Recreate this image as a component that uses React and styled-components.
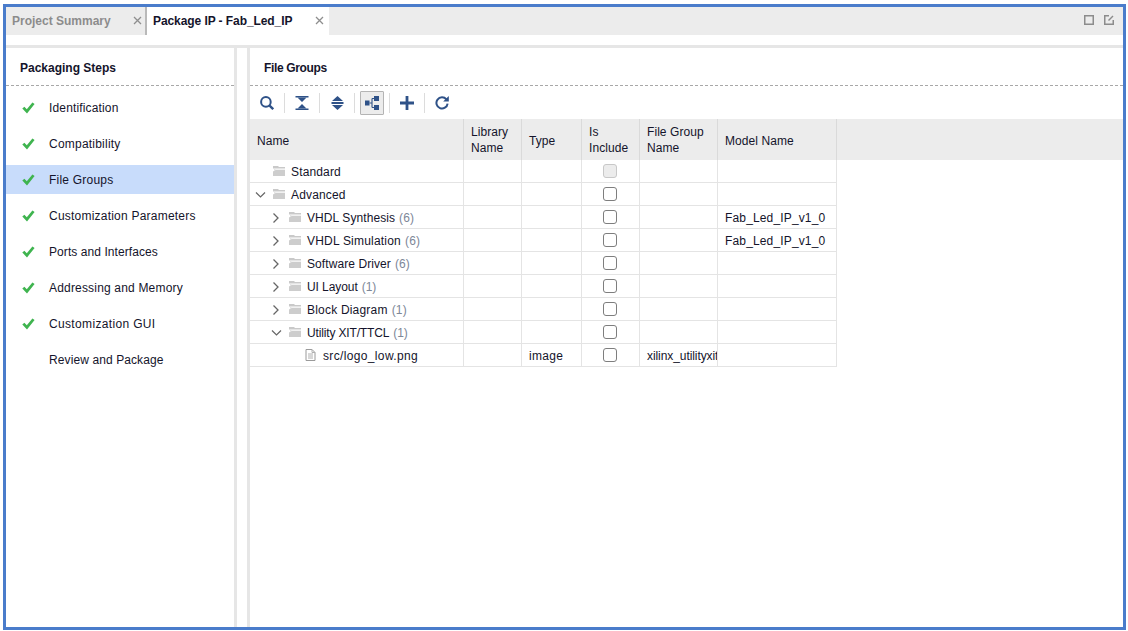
import React from "react";
import styled, { createGlobalStyle } from "styled-components";

const Global = createGlobalStyle`
  html, body { margin: 0; padding: 0; background: #fff; }
  body { font-family: "Liberation Sans", Arial, sans-serif; font-size: 12px; color: #14142b; overflow: hidden; }
  * { box-sizing: border-box; }
`;

const Frame = styled.div`
  margin: 4px 2px 0 3px;
  height: 626px;
  border: 3px solid #4a7ccb;
  display: flex;
  flex-direction: column;
  background: #fff;
`;
const TabBar = styled.div`
  height: 28px;
  background: #ececec;
  display: flex;
  align-items: stretch;
  flex: none;
`;
const Tab = styled.div`
  width: ${p => p.$w}px;
  display: flex;
  align-items: center;
  justify-content: space-between;
  padding: 0 ${p => (p.$active ? 5 : 3)}px 1px 6px;
  font-weight: bold;
  font-size: 12px;
  letter-spacing: ${p => (p.$active ? "-0.08px" : "0")};
  background: ${p => (p.$active ? "#fff" : "transparent")};
  color: ${p => (p.$active ? "#14142b" : "#8c8c8c")};
  border-right: ${p => (p.$active ? "0" : "2px solid #b9b9b9")};
`;
const TabSpacer = styled.div`
  flex: 1;
  display: flex;
  align-items: center;
  justify-content: flex-end;
  gap: 10px;
  padding: 0 9px 2px 0;
`;
const Body = styled.div`
  flex: 1;
  margin-top: 10px;
  border-top: 3px solid #e6e6e6;
  display: flex;
  min-height: 0;
`;
const Side = styled.div`
  width: 228px;
  flex: none;
`;
const Gutter = styled.div`
  width: 16px;
  flex: none;
  border-left: 3px solid #e6e6e6;
  border-right: 3px solid #e6e6e6;
`;
const Main = styled.div`
  flex: 1;
  min-width: 0;
  display: flex;
  flex-direction: column;
`;
const PanelTitle = styled.div`
  height: 38px;
  padding: 2px 0 0 14px;
  display: flex;
  align-items: center;
  font-weight: bold;
  font-size: 12px;
  letter-spacing: ${p => p.$ls || 0}px;
  color: #14142b;
  border-bottom: 1px dashed #a8a8a8;
  flex: none;
`;
const Steps = styled.div`
  display: flex;
  flex-direction: column;
  gap: 7px;
  padding-top: 7px;
`;
const Step = styled.div`
  height: 29px;
  display: flex;
  align-items: center;
  gap: 13px;
  padding-left: 16px;
  letter-spacing: ${p => p.$ls}px;
  background: ${p => (p.$sel ? "#c8dcfb" : "transparent")};
`;
const CheckSlot = styled.span`
  width: 14px;
  height: 12px;
  display: inline-flex;
`;
const Toolbar = styled.div`
  height: 33px;
  display: flex;
  align-items: center;
  padding: 0 0 0 5px;
  flex: none;
`;
const ToolBtn = styled.div`
  width: 24px;
  height: 24px;
  display: flex;
  align-items: center;
  justify-content: center;
  background: ${p => (p.$on ? "#ececec" : "transparent")};
  border: ${p => (p.$on ? "1px solid #b4b4b4" : "0")};
  border-radius: 1px;
`;
const ToolSep = styled.div`
  width: 1px;
  height: 20px;
  background: #dcdcdc;
  margin: 0 5px;
`;
const HeadRow = styled.div`
  height: 41px;
  background: #ececec;
  display: flex;
  flex: none;
`;
const HeadCell = styled.div`
  width: ${p => p.$w}px;
  flex: none;
  display: flex;
  align-items: center;
  padding: ${p => (p.$single ? 3 : 1)}px 4px 0 7px;
  line-height: 16px;
  letter-spacing: 0.07px;
  border-right: 1px solid #dadada;
`;
const Row = styled.div`
  height: 23px;
  width: 587px;
  display: flex;
  border-bottom: 1px solid #e4e4e4;
  flex: none;
`;
const Cell = styled.div`
  width: ${p => p.$w}px;
  flex: none;
  display: flex;
  align-items: center;
  padding: 2px 0 0 7px;
  letter-spacing: ${p => p.$ls ?? 0.15}px;
  border-right: 1px solid #e4e4e4;
  white-space: nowrap;
  overflow: hidden;
`;
const BoxCell = styled.div`
  width: ${p => p.$w}px;
  flex: none;
  display: flex;
  align-items: center;
  justify-content: center;
  padding-right: 2px;
  border-right: 1px solid #e4e4e4;
`;
const NameCell = styled(Cell)`
  padding-left: ${p => p.$level * 16 + 5}px;
`;
const Twist = styled.span`
  width: 12px;
  height: 12px;
  flex: none;
  display: inline-flex;
  margin-right: 6px;
`;
const NodeIcon = styled.span`
  width: 14px;
  height: 12px;
  flex: none;
  display: inline-flex;
  align-items: center;
  margin: 0 4px 2px 0;
`;
const Count = styled.span`
  color: #7d8798;
  margin-left: 4px;
`;
const Box = styled.span`
  width: 14px;
  height: 14px;
  border-radius: 3px;
  border: 1px solid ${p => (p.$off ? "#c8c8c8" : "#7e7e7e")};
  background: ${p => (p.$off ? "#ececec" : "#fff")};
`;

const NAVY = "#2f5288";

const Check = () => (
  <svg width="13" height="12" viewBox="0 0 13 12">
    <path d="M0.3 6.6 L2.4 4.8 L4.8 7.2 L10.4 0.4 L12.6 2 L5 11.4 Z" fill="#3fb44f" />
  </svg>
);
const Close = () => (
  <svg width="9" height="9" viewBox="0 0 9 9">
    <path d="M1 1 L8 8 M8 1 L1 8" stroke="#8e8e8e" strokeWidth="1.3" />
  </svg>
);
const Search = () => (
  <svg width="14" height="14" viewBox="0 0 14 14" fill="none">
    <circle cx="5.9" cy="5.9" r="4.8" stroke={NAVY} strokeWidth="2" />
    <path d="M9.6 9.6 L13.2 13.2" stroke={NAVY} strokeWidth="2.4" />
  </svg>
);
const CollapseAll = () => (
  <svg width="14" height="14" viewBox="0 0 14 14">
    <path d="M0.5 0 H13.5 V1.6 H0.5 Z M0.5 12.4 H13.5 V14 H0.5 Z" fill={NAVY} />
    <path d="M2.5 1.6 H11.5 L7 6 Z M2.5 12.4 H11.5 L7 8 Z" fill={NAVY} />
  </svg>
);
const ExpandAll = () => (
  <svg width="13" height="14" viewBox="0 0 13 14">
    <path d="M6.5 0 L12 5 H1 Z M6.5 14 L12 9 H1 Z" fill={NAVY} />
    <path d="M0.5 6 H12.5 V8 H0.5 Z" fill={NAVY} />
  </svg>
);
const Hier = () => (
  <svg width="14" height="14" viewBox="0 0 14 14">
    <path d="M0 4.5 H4.5 V9.5 H0 Z M9 0 H14 V5 H9 Z M9 9 H14 V14 H9 Z" fill={NAVY} />
    <path d="M4.5 7 H7 M7 2.5 V11.5 M7 2.5 H9 M7 11.5 H9" stroke={NAVY} strokeWidth="1.1" fill="none" />
  </svg>
);
const Plus = () => (
  <svg width="14" height="14" viewBox="0 0 14 14">
    <path d="M5.6 0 H8.4 V5.6 H14 V8.4 H8.4 V14 H5.6 V8.4 H0 V5.6 H5.6 Z" fill={NAVY} />
  </svg>
);
const Refresh = () => (
  <svg width="14" height="14" viewBox="0 0 14 14" fill="none">
    <path d="M11.4 3.4 A5.6 5.6 0 1 0 12.6 7.6" stroke={NAVY} strokeWidth="2" />
    <path d="M8.2 5.4 L13.8 5.4 L13.8 0 Z" fill={NAVY} />
  </svg>
);
const Folder = () => (
  <svg width="12" height="10" viewBox="0 0 12 10">
    <path d="M0 0 H5 L6 1 H12 V2.6 H0 Z" fill="#c9c9c9" />
    <path d="M0 2.6 H1 V5 L2.6 3.4 H12 V2.6 H0 Z" fill="#e4e4e4" />
    <path d="M0 10 V5.4 L2.6 4 H12 V10 Z" fill="#cdcdcd" />
  </svg>
);
const FileIco = () => (
  <svg width="11" height="12" viewBox="0 0 11 12" fill="none">
    <path d="M1 0.5 H7 L10 3.5 V11.5 H1 Z" stroke="#9a9a9a" />
    <path d="M3 5 H8 M3 7 H8 M3 9 H8 M7 0.5 V3.5 H10" stroke="#b0b0b0" />
  </svg>
);
const Right = () => (
  <svg width="12" height="12" viewBox="0 0 12 12" fill="none">
    <path d="M2.5 1.5 L7 6 L2.5 10.5" stroke="#666" strokeWidth="1.3" />
  </svg>
);
const Down = () => (
  <svg width="12" height="12" viewBox="0 0 12 12" fill="none">
    <path d="M1 3.5 L5.5 8 L10 3.5" stroke="#666" strokeWidth="1.2" />
  </svg>
);
const Maximize = () => (
  <svg width="10" height="10" viewBox="0 0 10 10" fill="none">
    <rect x="0.75" y="0.75" width="8.5" height="8.5" stroke="#8c8c8c" strokeWidth="1.5" />
  </svg>
);
const Float = () => (
  <svg width="10" height="10" viewBox="0 0 10 10" fill="none">
    <path d="M5 0.75 H0.75 V9.25 H9.25 V5" stroke="#8c8c8c" strokeWidth="1.5" />
    <path d="M4.5 5.5 L9 1" stroke="#8c8c8c" strokeWidth="1.5" />
  </svg>
);

const steps = [
  { label: "Identification", ok: true, ls: 0.15 },
  { label: "Compatibility", ok: true, ls: 0.22 },
  { label: "File Groups", ok: true, sel: true, ls: 0.22 },
  { label: "Customization Parameters", ok: true, ls: 0.22 },
  { label: "Ports and Interfaces", ok: true, ls: 0.07 },
  { label: "Addressing and Memory", ok: true, ls: 0.18 },
  { label: "Customization GUI", ok: true, ls: 0.34 },
  { label: "Review and Package", ok: false, ls: 0.1 },
];

const widths = [214, 58, 60, 58, 78, 119];
const heads = [
  { text: "Name", single: true },
  { text: "Library Name" },
  { text: "Type", single: true },
  { text: "Is Include" },
  { text: "File Group Name" },
  { text: "Model Name", single: true },
];

const rows = [
  { name: "Standard", level: 0, off: true },
  { name: "Advanced", level: 0, tw: "down" },
  { name: "VHDL Synthesis", count: 6, level: 1, tw: "right", model: "Fab_Led_IP_v1_0", ls: 0.08 },
  { name: "VHDL Simulation", count: 6, level: 1, tw: "right", model: "Fab_Led_IP_v1_0", ls: 0.2 },
  { name: "Software Driver", count: 6, level: 1, tw: "right", ls: 0.08 },
  { name: "UI Layout", count: 1, level: 1, tw: "right", ls: -0.07 },
  { name: "Block Diagram", count: 1, level: 1, tw: "right", ls: 0.2 },
  { name: "Utility XIT/TTCL", count: 1, level: 1, tw: "down", ls: -0.15 },
  { name: "src/logo_low.png", level: 2, file: true, type: "image", group: "xilinx_utilityxit", ls: 0.35 },
];

export default function App() {
  return (
    <>
      <Global />
      <Frame>
        <TabBar>
          <Tab $w={141}>Project Summary<Close /></Tab>
          <Tab $w={182} $active>Package IP - Fab_Led_IP<Close /></Tab>
          <TabSpacer><Maximize /><Float /></TabSpacer>
        </TabBar>
        <Body>
          <Side>
            <PanelTitle>Packaging Steps</PanelTitle>
            <Steps>
              {steps.map(s => (
                <Step key={s.label} $sel={s.sel} $ls={s.ls}>
                  <CheckSlot>{s.ok && <Check />}</CheckSlot>
                  <span>{s.label}</span>
                </Step>
              ))}
            </Steps>
          </Side>
          <Gutter />
          <Main>
            <PanelTitle $ls={-0.35}>File Groups</PanelTitle>
            <Toolbar>
              <ToolBtn><Search /></ToolBtn>
              <ToolSep />
              <ToolBtn><CollapseAll /></ToolBtn>
              <ToolSep />
              <ToolBtn><ExpandAll /></ToolBtn>
              <ToolSep />
              <ToolBtn $on><Hier /></ToolBtn>
              <ToolSep />
              <ToolBtn><Plus /></ToolBtn>
              <ToolSep />
              <ToolBtn><Refresh /></ToolBtn>
            </Toolbar>
            <HeadRow>
              {heads.map((h, i) => (
                <HeadCell key={h.text} $w={widths[i]} $single={h.single}>{h.text}</HeadCell>
              ))}
            </HeadRow>
            {rows.map(r => (
              <Row key={r.name}>
                <NameCell $w={widths[0]} $level={r.level} $ls={r.ls}>
                  <Twist>
                    {r.tw === "right" && <Right />}
                    {r.tw === "down" && <Down />}
                  </Twist>
                  <NodeIcon>{r.file ? <FileIco /> : <Folder />}</NodeIcon>
                  {r.name}
                  {r.count != null && <Count>({r.count})</Count>}
                </NameCell>
                <Cell $w={widths[1]} />
                <Cell $w={widths[2]} $ls={0.3}>{r.type}</Cell>
                <BoxCell $w={widths[3]}><Box $off={r.off} /></BoxCell>
                <Cell $w={widths[4]} $ls={-0.08}>{r.group}</Cell>
                <Cell $w={widths[5]}>{r.model}</Cell>
              </Row>
            ))}
          </Main>
        </Body>
      </Frame>
    </>
  );
}
